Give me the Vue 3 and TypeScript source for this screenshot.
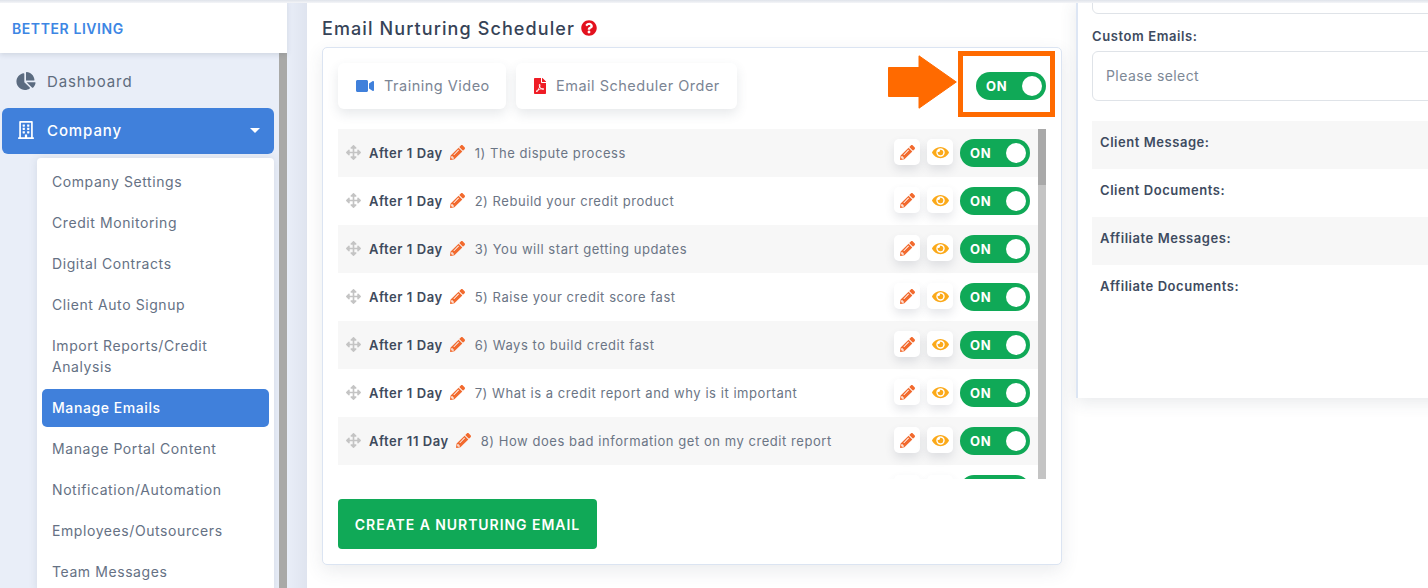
<script setup lang="ts">
interface Row { after: string; title: string }
const subMenu: string[] = ['Company Settings','Credit Monitoring','Digital Contracts','Client Auto Signup','Import Reports/Credit Analysis','Manage Emails','Manage Portal Content','Notification/Automation','Employees/Outsourcers','Team Messages']
const rows: Row[] = [
  { after: 'After 1 Day', title: '1) The dispute process' },
  { after: 'After 1 Day', title: '2) Rebuild your credit product' },
  { after: 'After 1 Day', title: '3) You will start getting updates' },
  { after: 'After 1 Day', title: '5) Raise your credit score fast' },
  { after: 'After 1 Day', title: '6) Ways to build credit fast' },
  { after: 'After 1 Day', title: '7) What is a credit report and why is it important' },
  { after: 'After 11 Day', title: '8) How does bad information get on my credit report' },
  { after: '', title: '' },
]
const infoRows: string[] = ['Client Message:','Client Documents:','Affiliate Messages:','Affiliate Documents:']
const pencil = 'M497.9 142.1l-46.1 46.1c-4.7 4.7-12.3 4.7-17 0l-111-111c-4.7-4.7-4.7-12.3 0-17l46.1-46.1c18.7-18.7 49.1-18.7 67.9 0l60.1 60.1c18.8 18.7 18.8 49.1 0 67.9zM284.2 99.8L21.6 362.4.4 483.9c-2.9 16.4 11.4 30.6 27.8 27.8l121.5-21.3 262.6-262.6c4.7-4.7 4.7-12.3 0-17l-111-111c-4.8-4.7-12.4-4.7-17.1 0zM124.1 339.9c-5.5-5.5-5.5-14.3 0-19.8l154-154c5.5-5.5 14.3-5.5 19.8 0s5.5 14.3 0 19.8l-154 154c-5.5 5.5-14.3 5.5-19.8 0zM88 424h48v36.3l-64.5 11.3-31.1-31.1L51.7 376H88v48z'
const eye = 'M572.52 241.4C518.29 135.59 410.93 64 288 64S57.68 135.64 3.48 241.41a32.35 32.35 0 0 0 0 29.19C57.71 376.41 165.07 448 288 448s230.32-71.64 284.52-177.41a32.35 32.35 0 0 0 0-29.19zM288 400a144 144 0 1 1 144-144 143.93 143.93 0 0 1-144 144zm0-240a95.31 95.31 0 0 0-25.31 3.79 47.85 47.85 0 0 1-66.9 66.9A95.78 95.78 0 1 0 288 160z'
const move = 'M352.201 425.775l-79.196 79.196c-9.373 9.373-24.568 9.373-33.941 0l-79.196-79.196c-15.119-15.119-4.411-40.971 16.971-40.97h51.162L228 284H127.196v51.162c0 21.382-25.851 32.09-40.971 16.971L7.029 272.937c-9.373-9.373-9.373-24.569 0-33.941L86.225 159.8c15.119-15.119 40.971-4.411 40.971 16.971V228H228V127.196h-51.23c-21.382 0-32.09-25.851-16.971-40.971l79.196-79.196c9.373-9.373 24.568-9.373 33.941 0l79.196 79.196c15.119 15.119 4.411 40.971-16.971 40.971h-51.162V228h100.804v-51.162c0-21.382 25.851-32.09 40.97-16.971l79.196 79.196c9.373 9.373 9.373 24.569 0 33.941L425.773 352.2c-15.119 15.119-40.971 4.411-40.97-16.971V284H284v100.804h51.23c21.382 0 32.09 25.851 16.971 40.971z'
</script>

<template>
  <div class="page">
    <aside class="side">
      <div class="brand">BETTER LIVING</div>
      <div class="side-body">
        <nav class="nav">
          <a class="nav-item">
            <svg class="nav-ic" viewBox="0 0 544 512" width="20" height="18"><path fill="#5b6b80" d="M527.79 288H290.5l158.03 158.03c6.04 6.04 15.98 6.53 22.19.68 38.7-36.46 65.32-85.61 73.13-140.86 1.34-9.46-6.51-17.85-16.06-17.85zm-15.83-64.8C503.72 103.74 408.26 8.28 288.8.04 279.68-.59 272 7.1 272 16.24V240h223.77c9.14 0 16.82-7.68 16.19-16.8zM224 288V50.71c0-9.55-8.39-17.4-17.84-16.06C86.99 51.49-4.1 155.6.14 280.37 4.5 408.51 114.83 513.59 243.03 511.98c50.4-.63 96.97-16.87 135.26-44.03 7.9-5.6 8.42-17.23 1.57-24.08L224 288z"/></svg>
            <span>Dashboard</span>
          </a>
          <a class="nav-item nav-active">
            <svg class="nav-ic" viewBox="0 0 448 512" width="20" height="18"><path fill="#fff" d="M128 148v-40c0-6.6 5.4-12 12-12h40c6.6 0 12 5.4 12 12v40c0 6.6-5.4 12-12 12h-40c-6.6 0-12-5.4-12-12zm140 12h40c6.6 0 12-5.4 12-12v-40c0-6.6-5.4-12-12-12h-40c-6.6 0-12 5.4-12 12v40c0 6.6 5.4 12 12 12zm-128 96h40c6.6 0 12-5.4 12-12v-40c0-6.6-5.4-12-12-12h-40c-6.6 0-12 5.4-12 12v40c0 6.6 5.4 12 12 12zm128 0h40c6.6 0 12-5.4 12-12v-40c0-6.6-5.4-12-12-12h-40c-6.6 0-12 5.4-12 12v40c0 6.6 5.4 12 12 12zm-76 84v-40c0-6.6-5.4-12-12-12h-40c-6.6 0-12 5.4-12 12v40c0 6.6 5.4 12 12 12h40c6.6 0 12-5.4 12-12zm76 12h40c6.6 0 12-5.4 12-12v-40c0-6.6-5.4-12-12-12h-40c-6.6 0-12 5.4-12 12v40c0 6.6 5.4 12 12 12zm180 124v36H0v-36c0-6.6 5.4-12 12-12h19.5V24c0-13.3 10.7-24 24-24h337c13.3 0 24 10.7 24 24v440H436c6.6 0 12 5.4 12 12zM79.5 463H192v-67c0-6.6 5.4-12 12-12h40c6.6 0 12 5.4 12 12v67h112.5V49L80 48l-.5 415z"/></svg>
            <span>Company</span>
            <i class="caret"></i>
          </a>
          <ul class="sub">
            <li v-for="m in subMenu" :key="m" :class="{ 'sub-active': m === 'Manage Emails' }">{{ m }}</li>
          </ul>
        </nav>
        <div class="side-bar"></div>
      </div>
    </aside>

    <main class="center">
      <h2 class="title">
        <span>Email Nurturing Scheduler</span>
        <svg viewBox="0 0 512 512" width="16" height="16"><path fill="#e3111e" d="M504 256c0 136.997-111.043 248-248 248S8 392.997 8 256C8 119.083 119.043 8 256 8s248 111.083 248 248zM262.655 90c-54.497 0-89.255 22.957-116.549 63.758-3.536 5.286-2.353 12.415 2.715 16.258l34.699 26.31c5.205 3.947 12.621 3.008 16.665-2.122 17.864-22.658 30.113-35.797 57.303-35.797 20.429 0 45.698 13.148 45.698 32.958 0 14.976-12.363 22.667-32.534 33.976C247.128 238.528 216 254.941 216 296v4c0 6.627 5.373 12 12 12h56c6.627 0 12-5.373 12-12v-1.333c0-28.462 83.186-29.647 83.186-106.667 0-58.002-60.165-102-116.531-102zM256 338c-25.365 0-46 20.635-46 46 0 25.364 20.635 46 46 46s46-20.636 46-46c0-25.365-20.635-46-46-46z"/></svg>
      </h2>
      <section class="card">
        <div class="top">
          <button class="tool tool-a">
            <svg viewBox="0 0 576 512" width="18" height="16"><path fill="#4080db" d="M336.2 64H47.8C21.4 64 0 85.4 0 111.8v288.4C0 426.6 21.4 448 47.8 448h288.4c26.4 0 47.8-21.4 47.8-47.8V111.8c0-26.4-21.4-47.8-47.8-47.8zm189.4 37.7L416 177.3v157.4l109.6 75.5c21.2 14.6 50.4-.3 50.4-25.8V127.5c0-25.4-29.1-40.4-50.4-25.8z"/></svg>
            <span>Training Video</span>
          </button>
          <button class="tool tool-b">
            <svg viewBox="0 0 384 512" width="12" height="16"><path fill="#ef1c25" d="M181.9 256.1c-5-16-4.9-46.9-2-46.9 8.4 0 7.6 36.9 2 46.9zm-1.7 47.2c-7.7 20.2-17.3 43.3-28.4 62.7 18.3-7 39-17.2 62.9-21.9-12.7-9.6-24.9-23.4-34.5-40.8zM86.1 428.1c0 .8 13.2-5.4 34.9-40.2-6.7 6.3-29.1 24.5-34.9 40.2zM248 160h136v328c0 13.3-10.7 24-24 24H24c-13.3 0-24-10.7-24-24V24C0 10.7 10.7 0 24 0h200v136c0 13.2 10.8 24 24 24zm-8 171.8c-20-12.2-33.3-29-42.7-53.8 4.5-18.5 11.6-46.6 6.2-64.2-4.7-29.4-42.4-26.5-47.8-6.8-5 18.3-.4 44.1 8.1 77-11.6 27.6-28.7 64.6-40.8 85.8-.1 0-.1.1-.2.1-27.1 13.9-73.6 44.5-54.5 68 5.6 6.9 16 10 21.5 10 17.9 0 35.7-18 61.1-61.8 25.8-8.5 54.1-19.1 79-23.2 21.7 11.8 47.1 19.5 64 19.5 29.2 0 31.2-32 19.7-43.4-13.9-13.6-54.3-9.7-73.6-7.2zM377 105L279 7c-4.5-4.5-10.6-7-17-7h-6v128h128v-6.1c0-6.3-2.5-12.4-7-16.9zm-74.1 255.3c4.1-2.7-2.5-11.9-42.8-9 37.1 15.8 42.8 9 42.8 9z"/></svg>
            <span>Email Scheduler Order</span>
          </button>
          <div class="master-toggle toggle"><span>ON</span><i></i></div>
          <div class="callout"></div>
          <svg class="arrow" viewBox="0 0 69 54" width="69" height="54"><polygon fill="#ff6a00" stroke="#ff6a00" stroke-linejoin="round" stroke-width="1" points="0.5,12.5 31,12.5 31,0.8 68.3,27 31,53.2 31,41.5 0.5,41.5"/></svg>
        </div>
        <div class="list">
          <div class="rows">
            <div v-for="(r, n) in rows" :key="n" class="row">
              <svg class="drag" viewBox="0 0 512 512" width="15" height="15"><path fill="#c4c4c4" :d="move"/></svg>
              <b class="after">{{ r.after }}</b>
              <svg class="pen" viewBox="0 0 512 512" width="15" height="15"><path fill="#f26a2e" :d="pencil"/></svg>
              <span class="name">{{ r.title }}</span>
              <button class="act"><svg viewBox="0 0 512 512" width="15" height="15"><path fill="#f26a2e" :d="pencil"/></svg></button>
              <button class="act"><svg viewBox="0 0 576 512" width="17" height="15"><path fill="#fba919" :d="eye"/></svg></button>
              <div class="toggle"><span v-if="r.title">ON</span><i></i></div>
            </div>
          </div>
          <div class="scroll"><div class="thumb"></div></div>
        </div>
        <button class="create">CREATE A NURTURING EMAIL</button>
      </section>
    </main>

    <aside class="panel">
      <div class="select select-cut"></div>
      <label class="lbl">Custom Emails:</label>
      <div class="select">Please select</div>
      <div class="info">
        <div v-for="i in infoRows" :key="i" class="info-row">{{ i }}</div>
      </div>
    </aside>
  </div>
</template>

<style>
html, body { margin: 0; background: #fff; overflow: hidden; }
</style>

<style scoped>
* { box-sizing: border-box; }
.page {
  width: 1428px; height: 588px; display: flex; overflow: hidden; position: relative;
  font-family: Inter, "Liberation Sans", sans-serif; color: #364357;
}
.page::before {
  content: ""; position: absolute; left: 0; right: 0; top: 0; height: 3px; z-index: 5;
  background: linear-gradient(#dfe3ea, #f4f5f8);
}
.side {
  width: 307px; flex: none; background: linear-gradient(90deg, #e9eef8 0, #e9eef8 287px, #dfe4ef 307px);
  display: flex; flex-direction: column; height: 588px;
}
.brand {
  width: 287px; height: 53px; padding: 3px 0 0 12px; background: #fff; flex: none;
  display: flex; align-items: center; color: #3d86e4; font-size: 14px; font-weight: 600; letter-spacing: .58px;
  box-shadow: 0 2px 5px rgba(60,70,90,.14); position: relative; z-index: 2;
}
.side-body { width: 287px; flex: 1; display: flex; overflow: hidden; }
.nav { width: 279px; flex: none; padding: 6px 5px 0 2px; }
.nav-item {
  height: 46px; display: flex; align-items: center; padding: 0 0 2px 14px; gap: 11px;
  font-size: 15px; letter-spacing: .9px; color: #5f6c7e; border-radius: 6px;
}
.nav-active { background: #4080db; color: #fff; font-weight: 500; padding-right: 14px; margin-top: 3px; }
.caret { margin-left: auto; border: 5px solid transparent; border-top-color: #fff; border-bottom: 0; }
.sub {
  list-style: none; margin: 4px 0 0 35px; padding: 5px 5px 0; background: #fff; border-radius: 4px 4px 0 0;
  box-shadow: 0 0 8px rgba(60,70,90,.12);
}
.sub li {
  margin: 0 0 3px; padding: 8px 10px 9px; font-size: 14px; line-height: 21px; letter-spacing: .58px;
  color: #657184; border-radius: 5px;
}
.sub .sub-active { background: #4080db; color: #fff; font-weight: 500; }
.side-bar { width: 8px; flex: none; background: #a9a9a7; }

.center { width: 769px; flex: none; padding: 12px 0 0 15px; }
.title {
  margin: 0; height: 35px; padding-bottom: 3px; display: flex; align-items: center; gap: 6px;
  font-size: 18px; font-weight: 500; letter-spacing: 1.1px; color: #364357;
}
.card {
  width: 740px; height: 518px; background: #fff; border: 1px solid #dbe4f2; border-radius: 5px;
  box-shadow: 0 6px 18px rgba(60,70,90,.1); padding: 15px 15px 0; position: relative;
}
.top { height: 46px; display: flex; gap: 10px; }
.tool {
  height: 46px; border: 0; background: #fff; border-radius: 6px; display: flex; align-items: center; gap: 10px;
  box-shadow: 0 5px 12px rgba(60,70,90,.12); font: inherit; font-size: 14.5px; letter-spacing: .5px; color: #7b8594; padding: 0 0 1px 18px;
}
.tool-a { width: 168px; }
.tool-b { width: 221px; }
.toggle {
  width: 70px; height: 28px; border-radius: 14px; background: #10a957; flex: none; position: relative;
  color: #fff; font-size: 13px; font-weight: 700; letter-spacing: .8px; line-height: 28px; padding-left: 10px;
}
.toggle i {
  position: absolute; right: 4px; top: 4px; width: 20px; height: 20px; border-radius: 50%; background: #fff;
}
.master-toggle { position: absolute; left: 653px; top: 24px; }
.callout { position: absolute; left: 635px; top: 3px; width: 97px; height: 66px; border: 5px solid #ff6a00; }
.arrow { position: absolute; left: 565px; top: 7px; }
.list { height: 350px; margin-top: 20px; display: flex; overflow: hidden; }
.rows { width: 700px; flex: none; }
.row { height: 48px; display: flex; align-items: center; padding: 0 8px 0 8px; }
.row:nth-child(odd) { background: #f7f7f7; }
.drag { margin-right: 8px; margin-top: -2px; flex: none; }
.after { font-size: 13px; font-weight: 600; letter-spacing: .55px; color: #3e4a5c; white-space: nowrap; }
.pen { margin: -2px 0 0 7px; flex: none; }
.name { margin-left: 10px; font-size: 13px; letter-spacing: .55px; color: #6b7585; white-space: nowrap; flex: 1; }
.act {
  width: 26px; height: 26px; border: 0; border-radius: 5px; background: #fff; margin-right: 7px; padding: 0; flex: none;
  display: flex; align-items: center; justify-content: center; box-shadow: 0 5px 10px rgba(60,70,90,.13); margin-top: -2px;
}
.scroll { width: 9px; background: #c4c4c4; flex: none; }
.thumb { height: 56px; background: #a9a9a9; }
.create {
  margin-top: 20px; width: 259px; height: 50px; border: 0; border-radius: 4px; background: #10a957; color: #fff;
  font: inherit; font-size: 14px; font-weight: 600; letter-spacing: .95px;
}

.panel {
  width: 400px; height: 398px; flex: none; background: #fff; border-left: 2px solid #dde6f4;
  box-shadow: 0 4px 16px rgba(60,70,90,.12); padding: 0 0 0 14px; overflow: hidden;
}
.select {
  height: 50px; width: 400px; border: 1px solid #dfe3e8; border-radius: 6px; display: flex; align-items: center; padding: 0 0 2px 13px;
  font-size: 14px; letter-spacing: .42px; color: #7d8896;
}
.select-cut { margin-top: -36px; }
.lbl { display: block; margin: 14px 0 7px; height: 16px; line-height: 16px; font-size: 13px; font-weight: 600; letter-spacing: .6px; color: #3e4b60; }
.info { margin-top: 20px; }
.info-row { height: 48px; padding: 13px 0 0 8px; width: 400px; font-size: 13px; line-height: 16px; font-weight: 600; letter-spacing: .55px; color: #3e4b60; }
.info-row:nth-child(odd) { background: #f7f7f7; }
</style>
